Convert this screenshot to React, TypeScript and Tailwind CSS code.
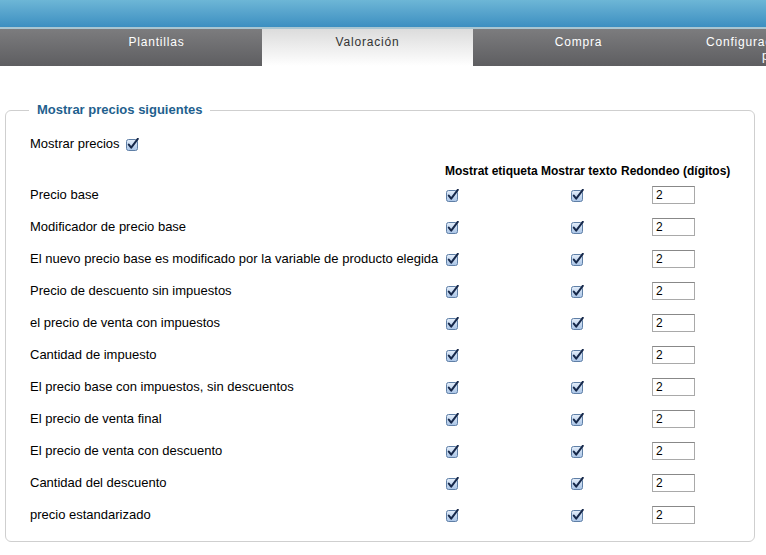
import React from 'react';

const tabs = [
  { label: 'Plantillas', active: false },
  { label: 'Valoración', active: true },
  { label: 'Compra', active: false },
];

const rows = [
  'Precio base',
  'Modificador de precio base',
  'El nuevo precio base es modificado por la variable de producto elegida',
  'Precio de descuento sin impuestos',
  'el precio de venta con impuestos',
  'Cantidad de impuesto',
  'El precio base con impuestos, sin descuentos',
  'El precio de venta final',
  'El precio de venta con descuento',
  'Cantidad del descuento',
  'precio estandarizado',
];

/** Mac-style checked checkbox */
function Check() {
  return (
    <svg width="13" height="13" viewBox="0 0 13 13" className="block">
      <defs>
        <linearGradient id="cbg" x1="0" y1="0" x2="0" y2="1">
          <stop offset="0" stopColor="#e4eefa" />
          <stop offset="1" stopColor="#a9c4e6" />
        </linearGradient>
      </defs>
      <rect x="0.5" y="1.5" width="11" height="11" rx="2" fill="url(#cbg)" stroke="#5f7fa6" />
      <path
        d="M2.8 6.6 L5.2 9.6 L11.8 0.8"
        fill="none"
        stroke="#16284a"
        strokeWidth="2"
        strokeLinecap="round"
        strokeLinejoin="round"
      />
    </svg>
  );
}

function Digits() {
  return (
    <div className="w-[43px] h-[18px] border border-[#a9a9a9] border-t-[#888] bg-white text-[12px] leading-[16px] pl-[3px] text-black">
      2
    </div>
  );
}

export default function App() {
  return (
    <div className="w-[766px] h-[555px] overflow-hidden bg-white font-['Liberation_Sans',Arial,sans-serif]">
      {/* Top bar */}
      <div className="h-[27px] bg-gradient-to-b from-[#6db6d6] to-[#3c8fc1]" />
      <div className="h-[2px] bg-[#a9c6d2]" />

      {/* Tabs */}
      <div className="h-[37px] flex bg-gradient-to-b from-[#7c7c7e] to-[#5e5e61] overflow-hidden">
        <div className="w-[51px] shrink-0" />
        {tabs.map((t) => (
          <div
            key={t.label}
            className={`w-[211px] shrink-0 flex justify-center pt-[6px] text-[12px] leading-[14px] tracking-[0.8px] text-center ${
              t.active
                ? 'bg-gradient-to-b from-[#dcdcdc] to-[#ffffff] text-[#333]'
                : 'text-white'
            }`}
          >
            {t.label}
          </div>
        ))}
        <div className="w-[211px] shrink-0 pl-[22px] pt-[6px] text-[12px] leading-[14px] tracking-[0.8px] text-white whitespace-nowrap">
          <span className="block">Configuración de la</span>
          <span className="block pl-[56px]">página</span>
        </div>
      </div>

      {/* Fieldset */}
      <div className="pl-[5px] pt-[36px]">
        <fieldset className="w-[750px] border border-[#cfcfcf] rounded-[6px] pl-[24px] pb-[10px] pt-[18px]">
          <legend className="-ml-[1px] px-[8px] text-[13px] leading-[16px] font-bold text-[#1f5f8e]">
            Mostrar precios siguientes
          </legend>

          <div className="flex items-center gap-[6px] h-[16px] text-[13px] text-black">
            <span>Mostrar precios</span>
            <Check />
          </div>

          <div className="grid grid-cols-[415px_96px_80px_110px] mt-[10px] h-[16px] items-center text-[12px] font-bold text-black whitespace-nowrap">
            <span />
            <span>Mostrat etiqueta</span>
            <span>Mostrar texto</span>
            <span>Redondeo (dígitos)</span>
          </div>

          <div className="mt-[1px]">
            {rows.map((r) => (
              <div
                key={r}
                className="grid grid-cols-[415px_96px_80px_110px] h-[32px] items-center text-[13px] text-black"
              >
                <span className="whitespace-nowrap">{r}</span>
                <div className="pl-[1px]">
                  <Check />
                </div>
                <div className="pl-[30px]">
                  <Check />
                </div>
                <div className="pl-[31px]">
                  <Digits />
                </div>
              </div>
            ))}
          </div>
        </fieldset>
      </div>
    </div>
  );
}
